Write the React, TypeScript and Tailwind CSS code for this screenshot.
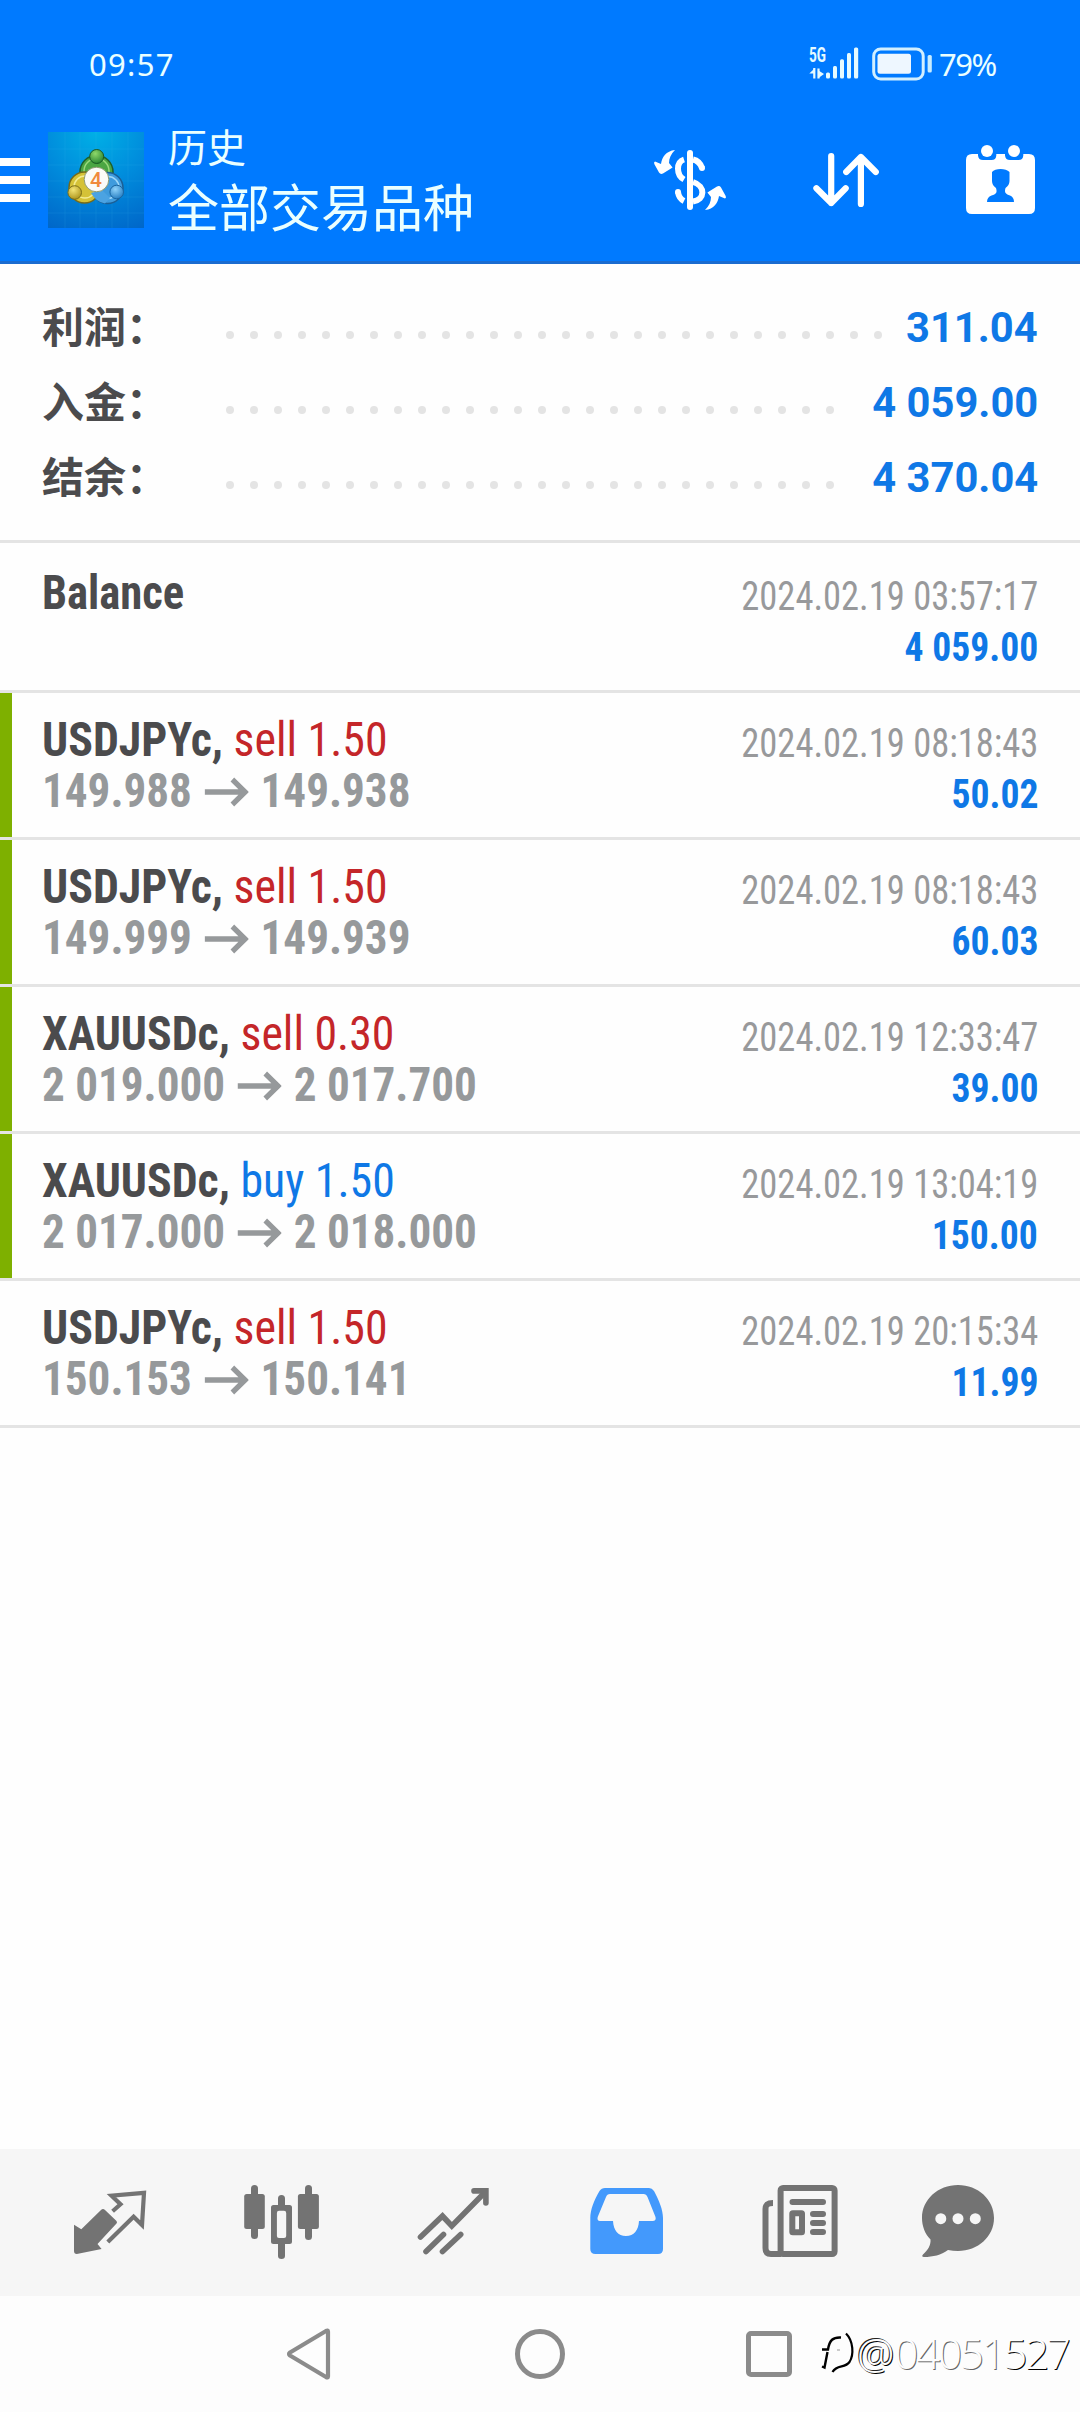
import React from "react";

type Deal = {
  symbol: string;
  side?: "sell" | "buy";
  volume?: string;
  open?: string;
  close?: string;
  time: string;
  profit: string;
  marked?: boolean;
};

const SUMMARY = [
  { label: "利润：", value: "311.04", dots: 28 },
  { label: "入金：", value: "4 059.00", dots: 26 },
  { label: "结余：", value: "4 370.04", dots: 26 },
];

const DEALS: Deal[] = [
  { symbol: "USDJPYc,", side: "sell", volume: "1.50", open: "149.988", close: "149.938", time: "2024.02.19 08:18:43", profit: "50.02", marked: true },
  { symbol: "USDJPYc,", side: "sell", volume: "1.50", open: "149.999", close: "149.939", time: "2024.02.19 08:18:43", profit: "60.03", marked: true },
  { symbol: "XAUUSDc,", side: "sell", volume: "0.30", open: "2 019.000", close: "2 017.700", time: "2024.02.19 12:33:47", profit: "39.00", marked: true },
  { symbol: "XAUUSDc,", side: "buy", volume: "1.50", open: "2 017.000", close: "2 018.000", time: "2024.02.19 13:04:19", profit: "150.00", marked: true },
  { symbol: "USDJPYc,", side: "sell", volume: "1.50", open: "150.153", close: "150.141", time: "2024.02.19 20:15:34", profit: "11.99" },
];

function SignalIcon() {
  return (
    <svg width="52" height="36" viewBox="0 0 52 36" fill="#e6fbff" className="overflow-visible">
      <text x="0" y="16" fontFamily="Roboto" fontWeight="700" fontSize="19.5" textLength="17" lengthAdjust="spacingAndGlyphs">5G</text>
      <path d="M5.300 32.500V22M9.500 22.500V32.500" stroke="#e6fbff" strokeWidth="2.200" />
      <path d="M0.300 27.500L6 22V27.500ZM9.500 24.500L15 28L9.500 32Z" />
      <rect x="17" y="26.5" width="4" height="6" rx="1.5" />
      <rect x="24" y="20" width="4" height="12.5" rx="1.5" />
      <rect x="31" y="13.3" width="4" height="19.2" rx="1.5" />
      <rect x="38" y="7" width="4" height="25.5" rx="1.5" />
      <rect x="45" y="1.5" width="4.2" height="31" rx="1.5" />
    </svg>
  );
}

function BatteryIcon() {
  return (
    <svg width="60" height="34" viewBox="0 0 60 34" fill="none">
      <rect x="1.7" y="2" width="49.5" height="30" rx="7" stroke="#d2efff" strokeWidth="3" />
      <rect x="5.5" y="6.7" width="33.5" height="20" rx="2.5" fill="#eef7ff" />
      <rect x="55.6" y="8" width="4.2" height="17.5" rx="1.5" fill="#c8ecff" />
    </svg>
  );
}

function AppLogo() {
  return (
    <svg width="96" height="96" viewBox="0 0 96 96">
      <defs>
        <radialGradient id="sky" cx="0.5" cy="0" r="1.1">
          <stop offset="0" stopColor="#00b0e6" />
          <stop offset="0.5" stopColor="#008bdc" />
          <stop offset="1" stopColor="#0067c9" />
        </radialGradient>
        <radialGradient id="green" cx="0.4" cy="0.3" r="0.8">
          <stop offset="0" stopColor="#8fd86a" />
          <stop offset="1" stopColor="#1f7d2c" />
        </radialGradient>
        <radialGradient id="gold" cx="0.4" cy="0.3" r="0.8">
          <stop offset="0" stopColor="#f3e476" />
          <stop offset="1" stopColor="#a58c12" />
        </radialGradient>
        <radialGradient id="aqua" cx="0.4" cy="0.3" r="0.8">
          <stop offset="0" stopColor="#8fd2fa" />
          <stop offset="1" stopColor="#1c76bd" />
        </radialGradient>
      </defs>
      <rect width="96" height="96" fill="url(#sky)" />
      <path d="M17 0v96M32 0v96M48 0v96M64 0v96M80 0v96M0 17h96M0 33h96M0 49h96M0 65h96M0 81h96" stroke="#46bdf0" strokeOpacity="0.13" />
      <circle cx="48.500" cy="40" r="16.500" fill="#4ba643" stroke="#1f5f2a" strokeWidth="1.500" />
      <circle cx="48.500" cy="39" r="12.500" fill="none" stroke="#9ad97c" strokeWidth="1.500" />
      <circle cx="59.500" cy="56" r="15.500" fill="#3f9bdd" stroke="#1b5f96" strokeWidth="1.500" />
      <circle cx="60" cy="55.500" r="11" fill="none" stroke="#9fd7f8" strokeWidth="1.500" />
      <circle cx="36.500" cy="55.500" r="15.500" fill="#d5c237" stroke="#756a1a" strokeWidth="1.500" />
      <circle cx="37" cy="55" r="11" fill="none" stroke="#f4ec92" strokeWidth="1.500" />
      <path d="M43 61Q48 70 57 71.500L62 66L54 58Z" fill="#4ba3e2" />
      <circle cx="48.700" cy="24.500" r="7" fill="url(#green)" stroke="#1b5a24" />
      <circle cx="26.700" cy="60.500" r="6.800" fill="url(#gold)" stroke="#7c6f18" />
      <circle cx="68.700" cy="60" r="6.800" fill="url(#aqua)" stroke="#1a65a0" />
      <circle cx="48.500" cy="47.500" r="12.300" fill="#fbfbf8" stroke="#8e9a72" />
      <text x="48" y="55" textAnchor="middle" fontFamily="Roboto" fontWeight="500" fontSize="21" fill="#f08a3c">4</text>
    </svg>
  );
}

function CurrencyIcon() {
  const arrow = "M21 0C12 1 8 7 7 14L1 11.500Q-0.500 12 0.300 14L5 22.500Q6.500 24.800 9 23.500L18.600 17.500L15 13C15 8 17 4 21 0Z";
  return (
    <svg width="72" height="60" viewBox="0 0 72 60" fill="none" className="overflow-visible">
      <rect x="33" width="6" height="60" rx="3" fill="#fff" />
      <g stroke="#fff" strokeWidth="6">
        <path d="M30 9.500C22 12 22 25 30 29.500M39 9.500C43.500 10.500 46.500 13.500 48 18M39 32C52 36 51 50 39 51.500M24 42C24.500 46 27 49.500 30 51" />
      </g>
      <circle cx="48" cy="18" r="3" fill="#fff" />
      <circle cx="24" cy="42" r="3" fill="#fff" />
      <path d={arrow} fill="#fff" />
      <path d={arrow} fill="#fff" transform="rotate(180 36 30)" />
    </svg>
  );
}

function SortIcon() {
  return (
    <svg width="66" height="56" viewBox="0 0 66 56" fill="none" stroke="#fff" strokeWidth="6.200" strokeLinecap="round" strokeLinejoin="round">
      <path d="M18.200 4V51M3.400 36.300L18.200 51L32.700 36.300M47.900 52V5M33.200 20L47.900 5L62.800 20" />
    </svg>
  );
}

function CalendarIcon() {
  return (
    <svg width="70" height="70" viewBox="0 0 70 70" fill="#fff">
      <path d="M6 9H12V10.500Q12.500 15 17 15H25.500Q30 15 30.300 10.500V9H39V10.500Q39.500 15 44 15H52.500Q57 15 57.300 10.500V9H63Q69 9 69 15V63Q69 69 63 69H6Q0 69 0 63V15Q0 9 6 9Z" />
      <circle cx="21" cy="6" r="6" />
      <circle cx="48" cy="6" r="6" />
      <path fill="#007aff" d="M26 27C29 23 40 23 43.500 27V36C43.500 39 42 41 39.500 43C38 48 40 49 44 50.500Q48 52 48 57H21Q21 52 25.500 50.500C30 49 31.500 48 30 43C27.500 41 26 39 26 36Z" />
    </svg>
  );
}

function PriceArrow() {
  return (
    <svg className="mx-[13px] mt-[3px]" width="47" height="30" viewBox="0 0 47 30" fill="none" stroke="#96999b" strokeWidth="5.600">
      <path d="M0 15H43M29.500 2.500L43 15L29.500 27.500" />
    </svg>
  );
}

function Tab({ className, children }: { className: string; children: React.ReactNode }) {
  return (
    <svg width="84" height="84" viewBox="0 0 84 84" fill="none" className={className}>
      {children}
    </svg>
  );
}

function TabBar() {
  return (
    <div className="flex h-[147px] items-center bg-[#f6f6f6] pb-px pl-[68px] text-[#737373]">
      <Tab className="mr-[88px]">
        <path fill="currentColor" d="M6 44.700L13.300 49.300L33 30Q35 28 37 30L48.500 41Q49.500 42.500 48.500 43.500L29.500 64L33.600 69L8.800 74Q6 74 6 71Z" />
        <path stroke="currentColor" strokeWidth="4.200" d="M44.600 31.300L52.500 24.300L43.500 15.700L76 12.900L74 45L65.600 36.700L39.800 62" />
      </Tab>
      <Tab className="mr-[88px]">
        <g fill="currentColor">
          <rect x="4.200" y="14" width="20.600" height="35" rx="2.500" />
          <rect x="11" y="5" width="7" height="54" rx="3.500" />
          <path fillRule="evenodd" d="M33.500 25H49.500Q52 25 52 27.500V61.500Q52 64 49.500 64H33.500Q31 64 31 61.500V27.500Q31 25 33.500 25ZM39 30.700Q36.900 30.700 36.900 33V56Q36.900 58 39 58H44Q46.200 58 46.200 56V33Q46.200 30.700 44 30.700Z" />
          <path d="M38 26V18.500Q38 15 41.500 15Q45 15 45 18.500V26ZM38 63H45V76Q45 79 41.500 79Q38 79 38 76Z" />
          <rect x="57.900" y="14" width="21" height="35" rx="2.500" />
          <rect x="65" y="5" width="7" height="55" rx="3.500" />
        </g>
      </Tab>
      <Tab className="mr-[89px]">
        <path stroke="currentColor" strokeWidth="5.600" strokeLinecap="round" d="M8.500 57L30.500 36L39.800 46L73 12.300M14 71.500L31.500 54.500M30.500 71.500L48.700 54.500" />
        <path stroke="currentColor" strokeWidth="5.600" strokeLinecap="round" d="M62 10.900H73.900V23" />
      </Tab>
      <Tab className="mr-[89px]">
        <path fill="#4399fc" fillRule="evenodd" d="M20 8H64Q67 8 69 11C74 20 78 30 78 38V69Q78 74 73 74H10.500Q5.300 74 5.300 69V38C5.300 30 9 20 14.500 11Q16.500 8 20 8ZM25 14Q22 14 21 17L12.700 37Q11.800 41 15 41H28C28.500 50 33 56 41 56C49 56 53.500 50 54 41H67.500Q71.500 41 70.500 37L62.500 17Q61.300 14 58.500 14Z" />
      </Tab>
      <Tab className="mr-[74px]">
        <g stroke="currentColor" strokeWidth="6">
          <rect x="22.600" y="8" width="54" height="66" rx="2.500" />
          <path d="M15 23C9.500 23 7.500 24.500 7.500 29V68Q7.500 74 13 74H23" />
          <path strokeLinecap="round" d="M34.500 22H65M55 34H65M55 43H65M55 52H65" />
          <rect x="34.300" y="33.300" width="9.700" height="19" rx="0.500" />
        </g>
      </Tab>
      <Tab className="">
        <path fill="currentColor" d="M42 5C62 5 78 19.500 78 38C78 56.500 62 71 42 71Q37 71 32 70C25 75 17 77 8 77Q5 76.500 7 74.500C12 70 15 65 14.500 59.500C9 54 6 46 6 38C6 19.500 22 5 42 5Z" />
        <g fill="#f6f6f6">
          <circle cx="24.800" cy="38.700" r="5.500" />
          <circle cx="42" cy="38.700" r="5.500" />
          <circle cx="59.300" cy="38.700" r="5.500" />
        </g>
      </Tab>
    </div>
  );
}

function SystemNav() {
  return (
    <div className="relative flex h-[116px] items-center bg-[#fdfdfd] pl-[286px] text-[#8b8b8b]">
      <svg width="46" height="54" viewBox="0 0 46 54" fill="none" stroke="currentColor" strokeWidth="4.200" strokeLinejoin="round">
        <path d="M42 4.500V49.500Q42 51 40 50L4 28.500Q2 27 4 25.500L40 4Q42 3 42 4.500Z" />
      </svg>
      <div className="ml-[183px] size-[50px] rounded-full border-[5px] border-current" />
      <div className="ml-[181px] size-[46px] rounded-[5px] border-[5px] border-current" />
      <div className="absolute top-[28px] left-[821px] flex items-center whitespace-nowrap">
        <svg width="36" height="58" viewBox="0 0 36 58" fill="none" stroke="#000">
          <path strokeWidth="2.400" d="M1 25.500H7C8.500 16 12 13 20 13.500M6.500 28L3.500 43.500L1 42.500" />
          <path strokeWidth="2.200" d="M25 9.500C32.500 17 33 31 28.500 38C24 44.500 16 40 11.500 48" />
          <path stroke="#999" d="M16 26H19" />
        </svg>
        <span className="font-['Noto_Sans'] text-[42px] leading-[58px] font-light text-[#fdfdfd]">
          <span className="[text-shadow:1px_1px_0_#000,-1px_-1px_0_#222]">@</span>
          <span className="tracking-[-2.200px] [text-shadow:1px_1px_0_#666]">04051</span>
          <span className="tracking-[-2.200px] [text-shadow:1px_1px_0_#000]">527</span>
        </span>
      </div>
    </div>
  );
}

function Header() {
  return (
    <header className="h-[264px] border-b-[3px] border-[#1a6cd0] bg-[#007aff] text-[#eaffff]">
      <div className="flex h-[128px] items-center justify-between pr-[84px] pl-[89px] font-['Noto_Sans'] text-[31px] leading-none">
        <span className="tracking-[1.300px]">09:57</span>
        <span className="flex items-center">
          <SignalIcon />
          <span className="ml-[11px]"><BatteryIcon /></span>
          <span className="ml-[7px] w-[57px] tracking-[-1.500px]">79%</span>
        </span>
      </div>
      <div className="flex h-[104px] items-center">
        <div className="flex w-[30px] flex-col gap-2.5">
          <span className="h-2 bg-white" />
          <span className="h-2 bg-white" />
          <span className="h-2 bg-white" />
        </div>
        <div className="ml-[18px]"><AppLogo /></div>
        <div className="mb-1 ml-6 flex w-[486px] flex-col font-['Noto_Sans_CJK_SC'] whitespace-nowrap">
          <span className="text-[39px] leading-[54px]">历史</span>
          <span className="text-[51px] leading-[66px]">全部交易品种</span>
        </div>
        <CurrencyIcon />
        <div className="ml-[87px]"><SortIcon /></div>
        <div className="ml-[87px]"><CalendarIcon /></div>
      </div>
    </header>
  );
}

function Summary() {
  return (
    <section className="h-[279px] border-b-[3px] border-[#e4e4e4] pt-[26px] pr-[42px] pl-[42px]">
      {SUMMARY.map((row) => (
        <div key={row.label} className="flex h-[75px] items-center">
          <span className="mb-[5px] w-[184px] shrink-0 font-['Noto_Sans_CJK_SC'] text-[42px] leading-[70px] font-bold text-[#4b4b4d]">{row.label}</span>
          <div className="mt-[15px] flex gap-4">
            {Array.from({ length: row.dots }, (_, i) => (
              <span key={i} className="size-2 rounded-full bg-[#e4e4e4]" />
            ))}
          </div>
          <span className="ml-auto origin-right scale-x-[0.992] text-[42px] leading-[75px] font-bold whitespace-nowrap text-[#0f78e6]">{row.value}</span>
        </div>
      ))}
    </section>
  );
}

function RightColumn({ time, profit }: { time: string; profit: string }) {
  return (
    <div className="ml-auto flex flex-col items-end pt-1 text-[40px] leading-[51px] whitespace-nowrap">
      <span className="origin-right scale-x-[0.913] text-[#98999b]">{time}</span>
      <span className="origin-right scale-x-[0.94] font-bold text-[#0f78e6]">{profit}</span>
    </div>
  );
}

function DealRow({ deal }: { deal: Deal }) {
  return (
    <div className="flex h-[147px] border-b-[3px] border-[#e4e4e4] font-stretch-condensed">
      <div className={deal.marked ? "w-3 bg-[#7eb000]" : "w-3"} />
      <div className="flex flex-1 pt-[21px] pr-[42px] pl-[30px]">
        <div className="text-[48px] leading-[51px] whitespace-nowrap">
          <div className="origin-left scale-x-[0.955]">
            <span className="font-bold text-[#4b4b4d]">{deal.symbol} </span>
            <span className={deal.side === "buy" ? "text-[#0f78e6]" : "text-[#c42629]"}>
              {deal.side} {deal.volume}
            </span>
          </div>
          <div className="flex origin-left scale-x-[0.94] items-center font-bold text-[#96999b]">
            <span>{deal.open}</span>
            <PriceArrow />
            <span>{deal.close}</span>
          </div>
        </div>
        <RightColumn time={deal.time} profit={deal.profit} />
      </div>
    </div>
  );
}

export default function App() {
  return (
    <div className="flex h-[2412px] w-[1080px] flex-col overflow-hidden bg-[#fefefe] font-['Roboto']">
      <Header />
      <Summary />
      <main className="flex-1">
        <div className="flex h-[150px] border-b-[3px] border-[#e4e4e4] px-[42px] pt-6 font-stretch-condensed">
          <span className="origin-left scale-x-[0.93] text-[48px] leading-[51px] font-bold text-[#4b4b4d]">Balance</span>
          <RightColumn time="2024.02.19 03:57:17" profit="4 059.00" />
        </div>
        {DEALS.map((deal, i) => (
          <DealRow key={i} deal={deal} />
        ))}
      </main>
      <TabBar />
      <SystemNav />
    </div>
  );
}
